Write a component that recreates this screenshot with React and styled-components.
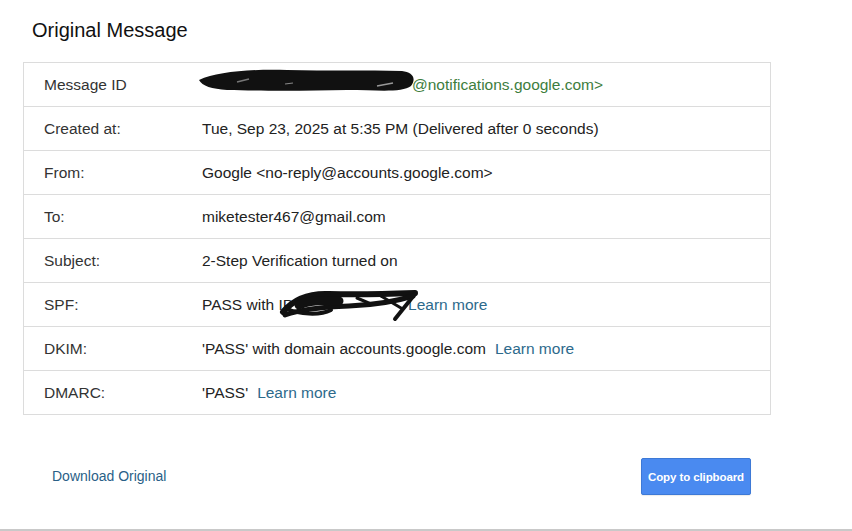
import React from "react";
import styled, { createGlobalStyle } from "styled-components";

const Global = createGlobalStyle`
  html, body { margin: 0; padding: 0; background: #fff; }
  body { font-family: Arial, "Liberation Sans", Helvetica, sans-serif; }
`;

const Page = styled.div`
  box-sizing: border-box;
  width: 852px;
  height: 531px;
  border-bottom: 2px solid #c9c9c9;
  padding: 18px 0 0 23px;
`;

const Title = styled.h1`
  margin: 0 0 20px 9px;
  font-size: 20px;
  line-height: 24px;
  font-weight: normal;
  color: #111;
`;

const Table = styled.div`
  width: 748px;
  box-sizing: border-box;
  border: 1px solid #dcdcdc;
  border-top: none;
`;

const Row = styled.div`
  display: grid;
  grid-template-columns: 178px 1fr;
  height: 44px;
  box-sizing: border-box;
  align-items: center;
  border-top: 1px solid #dcdcdc;
  font-size: 15.5px;
  color: #222;
`;

const Label = styled.div`
  padding-left: 20px;
  color: #333;
`;

const Value = styled.div`
  display: flex;
  align-items: center;
  white-space: pre;
  color: ${(p) => (p.$green ? "#3d7d3d" : "#222")};
`;

const Link = styled.a`
  color: #2d6a8c;
  text-decoration: none;
  margin-left: ${(p) => p.$gap || 0}px;
  cursor: pointer;
`;

const Redact = styled.span`
  position: relative;
  display: inline-block;
  width: ${(p) => p.$w}px;
  height: 20px;
`;

const Scribble = styled.svg`
  position: absolute;
  left: ${(p) => p.$l}px;
  top: ${(p) => p.$t}px;
  overflow: visible;
`;

const Footer = styled.div`
  display: flex;
  justify-content: space-between;
  align-items: center;
  width: 748px;
  box-sizing: border-box;
  padding: 0 20px 0 29px;
  margin-top: 43px;
`;

const Download = styled.a`
  font-size: 14px;
  color: #2a5f87;
  text-decoration: none;
  cursor: pointer;
  margin-top: -2px;
`;

const CopyButton = styled.button`
  width: 110px;
  height: 37px;
  background: #4a8af0;
  border: 1px solid #3d79d6;
  border-radius: 2px;
  color: #fff;
  font-family: Arial, "Liberation Sans", sans-serif;
  font-weight: bold;
  font-size: 11.5px;
  letter-spacing: -0.1px;
  padding: 0;
  cursor: pointer;
  box-shadow: 0 1px 1px rgba(0,0,0,0.08);
`;

const IdScribble = () => (
  <Scribble $l={-5} $t={-9} width="222" height="30" viewBox="0 0 222 30">
    <path
      d="M2 14 C 20 6, 50 3, 90 4 C 130 5, 170 4, 205 5 C 215 6, 220 12, 214 20 C 205 27, 180 24, 150 24 C 110 25, 60 25, 30 24 C 15 23, 5 20, 2 14 Z"
      fill="#111"
    />
    <path d="M40 16 L 52 13" stroke="#777" strokeWidth="1.5" />
    <path d="M88 18 L 96 17" stroke="#888" strokeWidth="1.2" />
    <path d="M180 20 L 196 17" stroke="#999" strokeWidth="1.5" />
    <path d="M200 10 C 210 8, 218 12, 212 18" stroke="#111" strokeWidth="4" fill="none" />
  </Scribble>
);

const IpScribble = () => (
  <Scribble $l={-14} $t={-7} width="142" height="34" viewBox="0 0 142 34">
    <path d="M4 24 C 14 12, 28 5, 50 6 C 80 7, 110 6, 136 5" stroke="#111" strokeWidth="6" fill="none" strokeLinecap="round" />
    <path d="M6 27 C 20 22, 40 19, 70 18 C 95 17, 115 14, 134 8" stroke="#111" strokeWidth="5" fill="none" strokeLinecap="round" />
    <path d="M20 17 C 30 12, 45 12, 60 13" stroke="#111" strokeWidth="9" fill="none" strokeLinecap="round" />
    <path d="M8 21 C 20 26, 40 28, 52 22" stroke="#111" strokeWidth="4" fill="none" strokeLinecap="round" />
    <path d="M136 6 L 116 31" stroke="#111" strokeWidth="4" fill="none" strokeLinecap="round" />
    <path d="M102 8 L 122 20" stroke="#111" strokeWidth="3" fill="none" strokeLinecap="round" />
    <path d="M78 10 L 92 16" stroke="#111" strokeWidth="3" fill="none" strokeLinecap="round" />
  </Scribble>
);

const rows = [
  { label: "Message ID", key: "id" },
  { label: "Created at:", value: "Tue, Sep 23, 2025 at 5:35 PM (Delivered after 0 seconds)" },
  { label: "From:", value: "Google <no-reply@accounts.google.com>" },
  { label: "To:", value: "miketester467@gmail.com" },
  { label: "Subject:", value: "2-Step Verification turned on" },
  { label: "SPF:", key: "spf" },
  { label: "DKIM:", key: "dkim" },
  { label: "DMARC:", key: "dmarc" },
];

function renderValue(r) {
  switch (r.key) {
    case "id":
      return (
        <Value $green>
          <Redact $w={210}><IdScribble /></Redact>
          {"@notifications.google.com>"}
        </Value>
      );
    case "spf":
      return (
        <Value>
          {"PASS with IP"}
          <Redact $w={115}><IpScribble /></Redact>
          <Link>Learn more</Link>
        </Value>
      );
    case "dkim":
      return (
        <Value>
          {"'PASS' with domain accounts.google.com"}
          <Link $gap={9}>Learn more</Link>
        </Value>
      );
    case "dmarc":
      return (
        <Value>
          {"'PASS'"}
          <Link $gap={9}>Learn more</Link>
        </Value>
      );
    default:
      return <Value>{r.value}</Value>;
  }
}

export default function App() {
  return (
    <>
      <Global />
      <Page>
        <Title>Original Message</Title>
        <Table>
          {rows.map((r) => (
            <Row key={r.label}>
              <Label>{r.label}</Label>
              {renderValue(r)}
            </Row>
          ))}
        </Table>
        <Footer>
          <Download>Download Original</Download>
          <CopyButton>Copy to clipboard</CopyButton>
        </Footer>
      </Page>
    </>
  );
}
